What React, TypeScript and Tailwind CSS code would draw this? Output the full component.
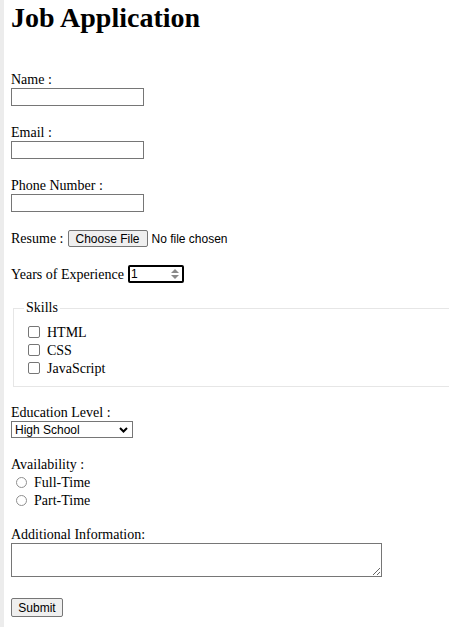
import React from 'react'

const Checkbox = ({ label }: { label: string }) => (
  <div className="flex h-[18px] items-center">
    <span className="ml-[4px] h-[12px] w-[12px] rounded-[2px] border border-[#767676] bg-white" />
    <span className="ml-[7px]">{label}</span>
  </div>
)

const Radio = ({ label }: { label: string }) => (
  <div className="flex h-[18px] items-center">
    <span className="ml-[5px] h-[11px] w-[11px] rounded-full border border-[#8f8f8f] bg-white" />
    <span className="ml-[7px]">{label}</span>
  </div>
)

const TextField = ({ label, top }: { label: string; top: string }) => (
  <div className={top}>
    <div className="h-4 leading-4">{label}</div>
    <input type="text" className="block h-[18px] w-[133px] border border-[#767676] bg-white outline-none" />
  </div>
)

const App: React.FC = () => {
  return (
    <div className="min-h-screen border-l-4 border-[#ececec] bg-white pt-[2px] pl-[7px] font-['Liberation_Serif',serif] text-[14px] text-black overflow-hidden">
      <h1 className="h-8 text-[28px] font-bold leading-8">Job Application</h1>

      <TextField label="Name :" top="mt-[38px]" />
      <TextField label="Email :" top="mt-[19px]" />
      <TextField label="Phone Number :" top="mt-[19px]" />

      {/* resume */}
      <div className="mt-[18px] flex h-[17px] items-center">
        <span>Resume :</span>
        <span className="ml-[4px] flex h-[17px] w-[80px] items-center justify-center rounded-[2px] border border-[#767676] bg-[#efefef] font-['Liberation_Sans',sans-serif] text-[12px]">
          Choose File
        </span>
        <span className="ml-[4px] font-['Liberation_Sans',sans-serif] text-[12px]">No file chosen</span>
      </div>

      {/* experience */}
      <div className="mt-[18px] flex h-[18px] items-center">
        <span>Years of Experience</span>
        <div className="ml-[4px] flex h-[18px] w-[56px] items-center justify-between rounded-[2px] border-2 border-black bg-white pl-[1px] pr-[3px] font-['Liberation_Sans',sans-serif] text-[12px]">
          <span>1</span>
          <svg width="8" height="10" viewBox="0 0 8 10" fill="#8a8a8a">
            <path d="M4 0L8 4H0Z" />
            <path d="M0 6H8L4 10Z" />
          </svg>
        </div>
      </div>

      {/* skills */}
      <fieldset className="mt-[17px] ml-[2px] border border-r-0 border-[#e6e6e6] px-[10px] pb-[9px]">
        <legend className="px-[2px] leading-4">Skills</legend>
        <div className="pt-[7px]">
          <Checkbox label="HTML" />
          <Checkbox label="CSS" />
          <Checkbox label="JavaScript" />
        </div>
      </fieldset>

      {/* education */}
      <div className="mt-[18px]">
        <div className="h-4 leading-4">Education Level :</div>
        <div className="flex h-[17px] w-[122px] items-center justify-between border border-[#767676] bg-white pl-[3px] pr-[4px] font-['Liberation_Sans',sans-serif] text-[12px]">
          <span>High School</span>
          <svg width="9" height="6" viewBox="0 0 9 6" fill="none" stroke="#000" strokeWidth="2">
            <path d="M1 1L4.5 4.5L8 1" />
          </svg>
        </div>
      </div>

      {/* availability */}
      <div className="mt-[19px]">
        <div className="h-4 leading-4">Availability :</div>
        <Radio label="Full-Time" />
        <Radio label="Part-Time" />
      </div>

      {/* additional info */}
      <div className="mt-[18px]">
        <div className="h-4 leading-4">Additional Information:</div>
        <textarea className="block h-[34px] w-[371px] resize border border-[#767676] bg-white outline-none" />
      </div>

      <button
        type="button"
        className="mt-[21px] h-[19px] w-[52px] rounded-[2px] border border-[#767676] bg-[#efefef] font-['Liberation_Sans',sans-serif] text-[12px] leading-none"
      >
        Submit
      </button>
    </div>
  )
}

export default App
